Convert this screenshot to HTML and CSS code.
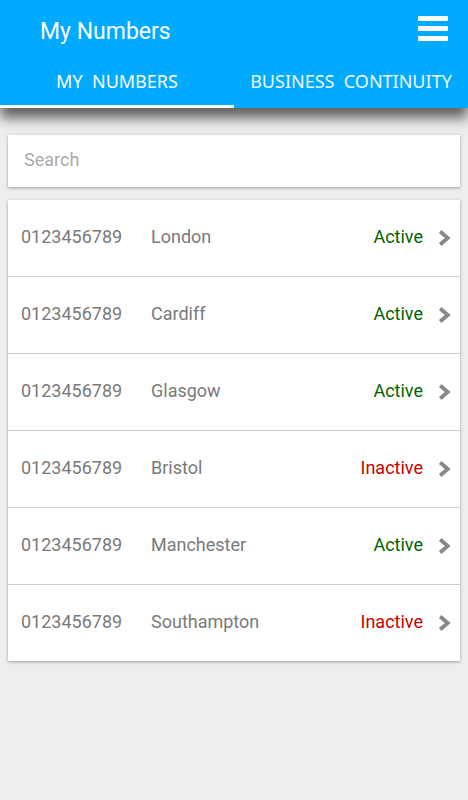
FILE: index.html
```html
<!DOCTYPE html>
<html lang="en">

<head>
  <meta charset="UTF-8">
  <meta name="viewport" content="width=device-width, initial-scale=1.0">
  <title>My Numbers</title>
  <link rel="stylesheet" href="styles.css">
</head>

<body>
  <header class="app-bar">
    <div class="toolbar">
      <h1>My Numbers</h1>
      <button class="menu-btn" aria-label="Menu">
        <span></span><span></span><span></span>
      </button>
    </div>
    <nav class="tabs">
      <a class="tab active">MY&nbsp; NUMBERS</a>
      <a class="tab">BUSINESS&nbsp; CONTINUITY</a>
    </nav>
  </header>

  <main class="content">
    <div class="search-card">
      <input type="text" placeholder="Search">
    </div>

    <ul class="number-list">
      <li><span class="num">0123456789</span><span class="city">London</span><span class="status active">Active</span><svg class="chev" viewBox="0 0 12 16"><polyline points="2,2 9,8 2,14" /></svg></li>
      <li><span class="num">0123456789</span><span class="city">Cardiff</span><span class="status active">Active</span><svg class="chev" viewBox="0 0 12 16"><polyline points="2,2 9,8 2,14" /></svg></li>
      <li><span class="num">0123456789</span><span class="city">Glasgow</span><span class="status active">Active</span><svg class="chev" viewBox="0 0 12 16"><polyline points="2,2 9,8 2,14" /></svg></li>
      <li><span class="num">0123456789</span><span class="city">Bristol</span><span class="status inactive">Inactive</span><svg class="chev" viewBox="0 0 12 16"><polyline points="2,2 9,8 2,14" /></svg></li>
      <li><span class="num">0123456789</span><span class="city">Manchester</span><span class="status active">Active</span><svg class="chev" viewBox="0 0 12 16"><polyline points="2,2 9,8 2,14" /></svg></li>
      <li><span class="num">0123456789</span><span class="city">Southampton</span><span class="status inactive">Inactive</span><svg class="chev" viewBox="0 0 12 16"><polyline points="2,2 9,8 2,14" /></svg></li>
    </ul>
  </main>
</body>

</html>
```

FILE: styles.css
```css
body {
  margin: 0;
  padding: 0;
  background: #eeeeee;
  font-family: Roboto, "Liberation Sans", sans-serif;
  height: 100vh;
  overflow: hidden;
}

.app-bar {
  background: #00aaff;
  color: #fff;
  box-shadow: 0 10px 12px rgba(0, 0, 0, 0.6);
  position: relative;
  z-index: 2;
}

.toolbar {
  height: 62px;
  display: flex;
  align-items: center;
  justify-content: space-between;
  padding: 0 20px 0 40px;
}

.toolbar h1 {
  margin: 0;
  font-size: 23px;
  font-weight: 400;
}

.menu-btn {
  background: none;
  border: none;
  padding: 0;
  width: 30px;
  display: flex;
  flex-direction: column;
  gap: 5px;
  margin-bottom: 5px;
}

.menu-btn span {
  display: block;
  height: 5px;
  background: #fff;
  border-radius: 1px;
}

.tabs {
  display: flex;
  height: 46px;
}

.tab {
  flex: 1;
  display: flex;
  justify-content: center;
  align-items: center;
  font-family: "Noto Sans", "Open Sans", sans-serif;
  font-size: 18px;
  color: #eef8ff;
  border-bottom: 3px solid transparent;
  padding-bottom: 6px;
}

.tab.active {
  color: #fff;
  border-bottom-color: #fff;
}

.content {
  padding: 27px 8px;
}

.search-card {
  background: #fff;
  height: 52px;
  box-shadow: 0 1px 3px rgba(0, 0, 0, 0.35);
  display: flex;
  align-items: center;
}

.search-card input {
  border: none;
  outline: none;
  width: 100%;
  padding: 0 16px 3px;
  font-family: Roboto, sans-serif;
  font-size: 18px;
  color: #777;
  background: transparent;
}

.search-card input::placeholder {
  color: #aaaaaa;
}

.number-list {
  list-style: none;
  margin: 13px 0 0;
  padding: 0;
  background: #fff;
  box-shadow: 0 1px 3px rgba(0, 0, 0, 0.35);
}

.number-list li {
  display: flex;
  align-items: center;
  height: 72px;
  padding: 0 9px 4px 13px;
  border-bottom: 1px solid #cccccc;
  font-size: 18px;
  color: #7a7a7a;
}

.number-list li:last-child {
  border-bottom: none;
}

.num {
  width: 130px;
}

.city {
  flex: 1;
}

.status.active {
  color: #006400;
}

.status.inactive {
  color: #cc0000;
}

.chev {
  width: 13px;
  height: 18px;
  margin: 4px 0 0 15px;
  fill: none;
  stroke: #888;
  stroke-width: 3.5;
}
```
